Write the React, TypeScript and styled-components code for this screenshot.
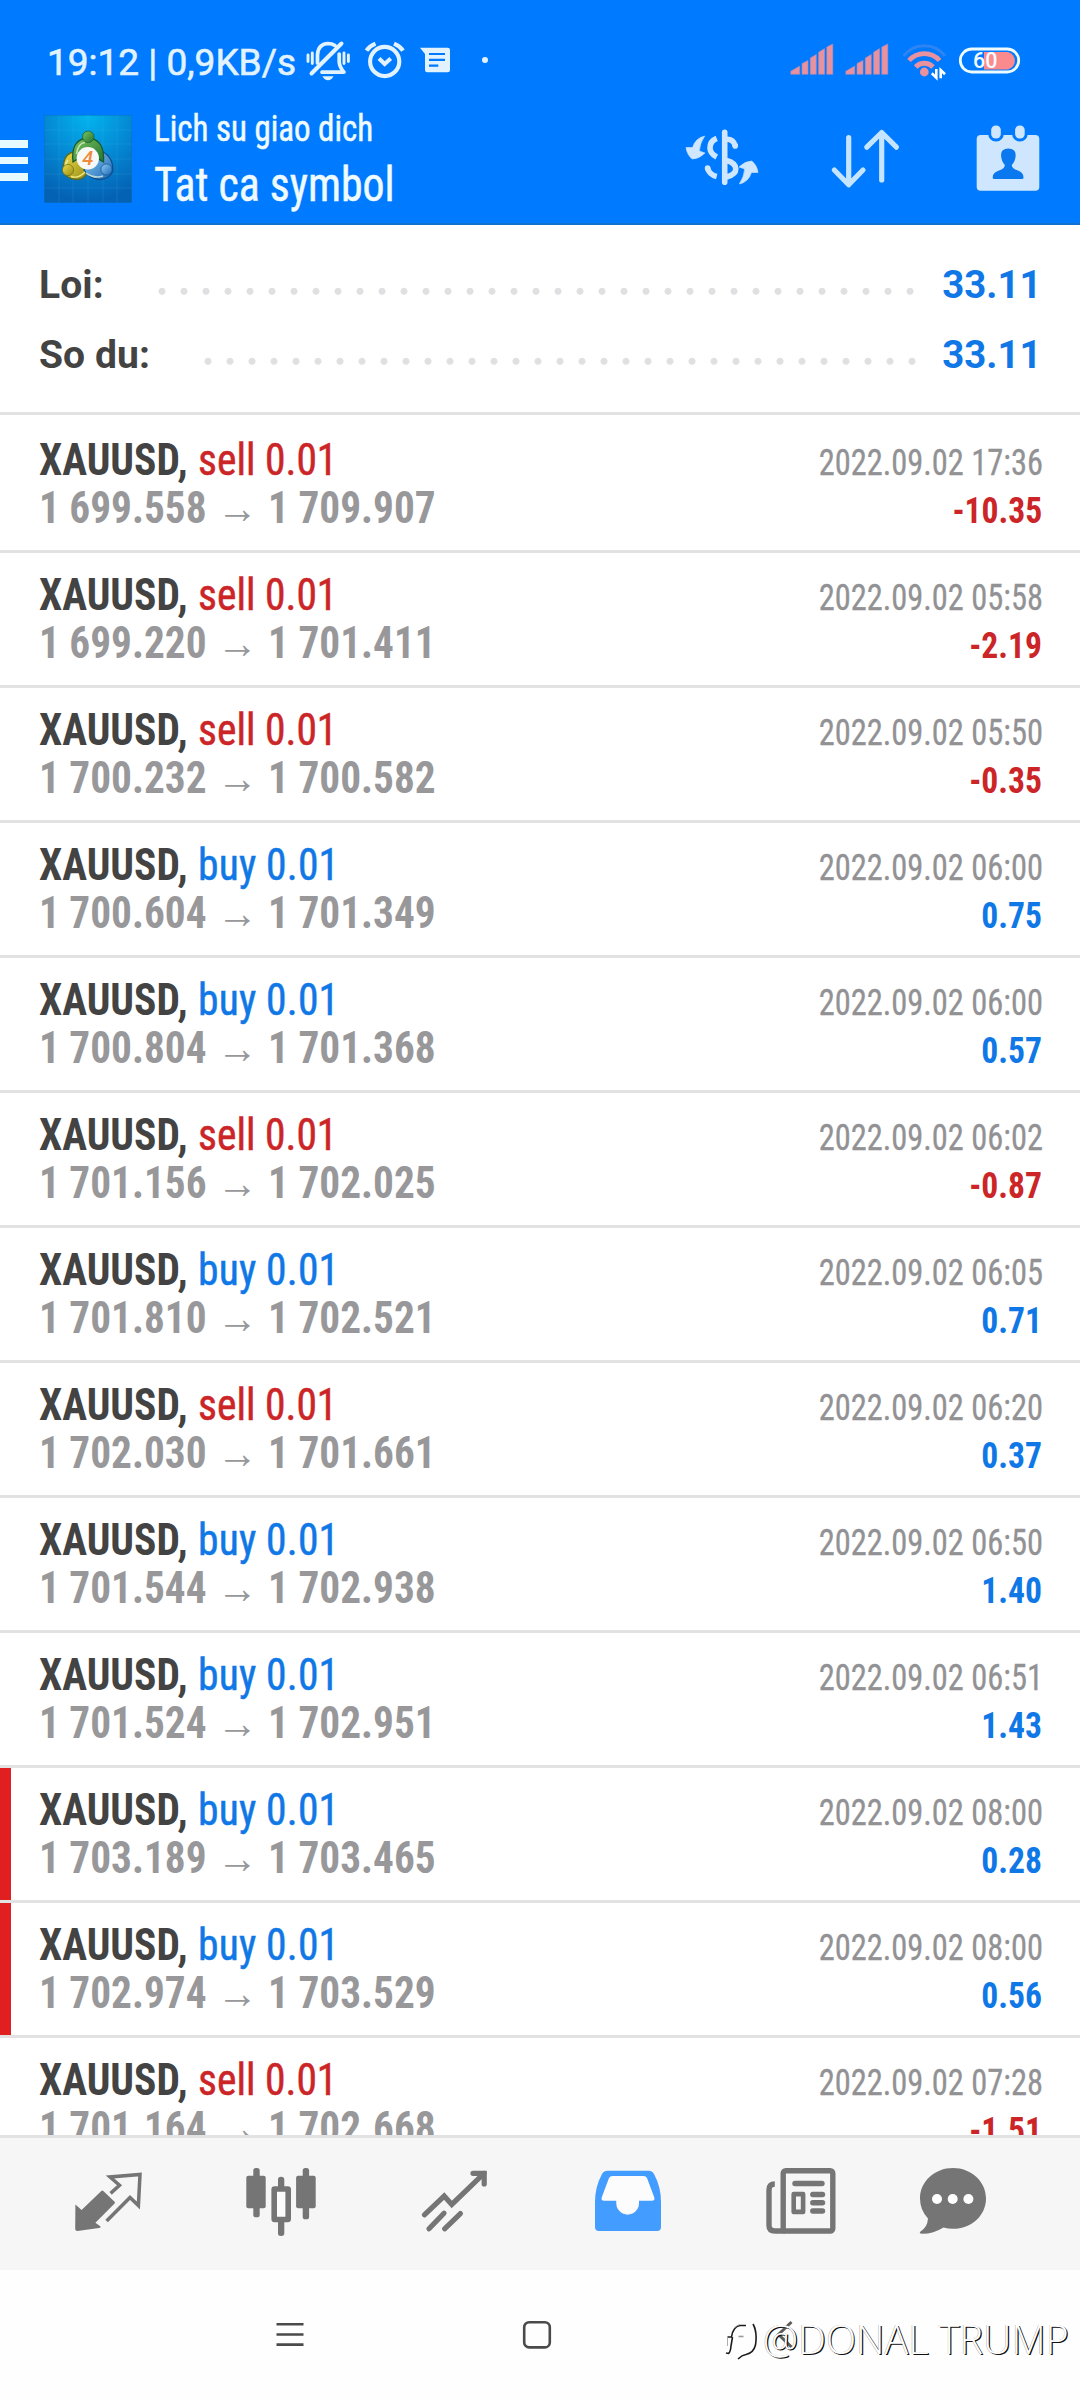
import React from 'react';
import styled, { createGlobalStyle } from 'styled-components';

const BLUE = '#007aff';
const ICON = '#cfe6ff';
const STATUS = '#e2f3ff';
const SIGNAL = '#e8919f';
const GREY = '#757575';

const GlobalStyle = createGlobalStyle`
  html, body { margin: 0; padding: 0; background: #fff; }
  * { box-sizing: border-box; }
  svg { display: block; flex: none; }
`;

const Screen = styled.div`
  position: relative;
  width: 1080px;
  height: 2400px;
  display: flex;
  flex-direction: column;
  overflow: hidden;
  background: #fff;
  font-family: Roboto, 'Liberation Sans', sans-serif;
`;

const Header = styled.header`
  flex: none;
  height: 225px;
  background: ${BLUE};
  border-bottom: 2px solid #1272cf;
  padding-top: 30px;
`;

const StatusBar = styled.div`
  height: 60px;
  padding: 0 59px 0 47px;
  display: flex;
  align-items: center;
  color: ${STATUS};
`;

const StatusText = styled.span`
  font-size: 37px;
  line-height: 60px;
  margin-top: 5px;
  width: 249px;
  white-space: nowrap;
  -webkit-text-stroke: 0.6px ${STATUS};
`;

const StatusSlot = styled.span<{ $gap: number }>`
  margin-left: ${(p) => p.$gap}px;
`;

const Spacer = styled.span`
  flex: 1;
`;

const AppBar = styled.div`
  height: 134px;
  padding-right: 32px;
  display: flex;
  align-items: center;
`;

const MenuButton = styled.div`
  width: 28px;
  margin-top: 7px;
  display: flex;
  flex-direction: column;
  gap: 9px;
`;

const MenuBar = styled.span`
  height: 7.6px;
  background: #e6faff;
`;

const LogoBox = styled.div`
  width: 88px;
  height: 88px;
  margin: 4px 0 0 16px;
`;

const Titles = styled.div`
  margin-left: 22px;
  padding-top: 11px;
  width: 300px;
  color: #effbff;
  font-family: 'Roboto Condensed', Roboto, sans-serif;
  white-space: nowrap;
  -webkit-text-stroke: 0.5px #effbff;
`;

const Subtitle = styled.div`
  font-size: 36px;
  line-height: 44px;
  transform: scaleX(0.915);
  transform-origin: left;
`;

const Title = styled.div`
  font-size: 48px;
  line-height: 68px;
  transform: scaleX(0.913);
  transform-origin: left;
`;

const Actions = styled.div`
  margin-left: auto;
  display: flex;
  gap: 63px;
`;

const Summary = styled.section`
  flex: none;
  height: 190px;
  padding: 25px 38.5px 0 39px;
  border-bottom: 3px solid #e2e2e3;
`;

const SummaryRow = styled.div`
  display: flex;
  height: 70px;
  line-height: 70px;
  font-size: 39px;
  font-weight: 700;
  color: #434343;
`;

const SummaryLabel = styled.span`
  letter-spacing: 0.1px;
`;

const Dots = styled.span`
  flex: 1;
  margin: 0 16px 0 47px;
  background: radial-gradient(circle at 11px 41.3px, #e0e0e2 3px, transparent 4px) 0 0 / 22px 70px repeat-x;
`;

const SummaryValue = styled.span`
  font-size: 38.4px;
  color: #0f78e6;
`;

const List = styled.main`
  flex: 1;
  min-height: 0;
  overflow: hidden;
  padding-top: 3px;
`;

const Row = styled.article<{ $flagged: boolean }>`
  height: 135px;
  padding: 18px 37.5px 0 39px;
  border-bottom: 3px solid #e2e2e3;
  font-family: 'Roboto Condensed', Roboto, sans-serif;
  ${(p) => (p.$flagged ? 'box-shadow: inset 11px 0 0 #e01f21;' : '')}
`;

const Line = styled.div`
  display: flex;
  justify-content: space-between;
  align-items: baseline;
  height: 48px;
  line-height: 48px;
  white-space: nowrap;
`;

const Deal = styled.span`
  font-size: 44px;
  transform: scaleX(0.943);
  transform-origin: left;
`;

const Symbol = styled.b`
  font-weight: 700;
  color: #434343;
`;

const Side = styled.span<{ $side: 'buy' | 'sell' }>`
  margin-left: 1px;
  letter-spacing: ${(p) => (p.$side === 'buy' ? 0.2 : 0)}px;
  color: ${(p) => (p.$side === 'buy' ? '#0f78e6' : '#cb2528')};
  -webkit-text-stroke: 0.5px ${(p) => (p.$side === 'buy' ? '#0f78e6' : '#cb2528')};
`;

const Prices = styled.span`
  font-size: 44px;
  font-weight: 700;
  color: #98989b;
  transform: scaleX(0.938);
  transform-origin: left;
`;

const Arrow = styled.span`
  margin: 0 0.6px 0 0.8px;
`;

const Time = styled.span`
  font-size: 36px;
  color: #929295;
  transform: scaleX(0.901);
  transform-origin: right;
  -webkit-text-stroke: 0.3px #929295;
`;

const Profit = styled.span<{ $loss: boolean }>`
  font-size: 36px;
  font-weight: 700;
  color: ${(p) => (p.$loss ? '#cb2528' : '#0f78e6')};
  transform: scaleX(0.933);
  transform-origin: right;
`;

const TabBar = styled.nav`
  flex: none;
  height: 135px;
  padding-left: 21px;
  border-top: 3px solid #e2e2e3;
  background: #f6f6f6;
  display: flex;
`;

const Tab = styled.div<{ $width?: number }>`
  width: ${(p) => p.$width ?? 173.3}px;
  display: flex;
  align-items: center;
  justify-content: center;
`;

const SystemBar = styled.div`
  flex: none;
  height: 130px;
  padding-left: 166px;
  background: #fefefe;
  display: flex;
`;

const SystemKey = styled.div`
  width: 247.6px;
  display: flex;
  align-items: center;
  justify-content: center;
`;

const Watermark = styled.div`
  position: absolute;
  left: 722px;
  top: 2312px;
  display: flex;
  align-items: center;
  height: 56px;
  white-space: nowrap;
  font: 300 40px/56px 'Open Sans', 'Noto Sans', sans-serif;
  color: #fff;
  text-shadow: 1.2px 1px 0.4px #111, -0.5px 0 0.5px rgba(0, 0, 0, 0.35);
`;

const WatermarkText = styled.span`
  margin: -3px 0 0 5px;
  transform: scaleX(0.988);
  transform-origin: left;
`;

const MutedBell = () => (
  <svg width="46" height="44" fill="none" stroke={STATUS} strokeLinecap="round" strokeWidth="2.8">
    <path d="M3 17v6.5M7.3 15v10.500M39 15v10.500M43.400 17v6.500" strokeWidth="2.900" />
    <path d="M12.5 25V17Q13 6 23 5.500Q27 5.500 30 7.500" strokeWidth="3.700" />
    <path d="M34.2 16V24Q34.500 29 39 34.200H17" strokeWidth="3.700" strokeLinejoin="round" />
    <path d="M6.500 35.500L36.500 5.500" strokeWidth="4" />
    <path d="M17.500 38.200h11q-2 4-5.500 4t-5.500-4z" fill={STATUS} stroke="none" />
  </svg>
);

const Alarm = () => (
  <svg width="42" height="44" fill="none" stroke={STATUS} strokeWidth="4.1">
    <circle cx="20.7" cy="23.5" r="14.6" />
    <path d="M15 20.5l5.7 5.5 6-5.5" />
    <path d="M2.5 12.6Q5.5 8 11.5 5.6M30 5.6Q36 8 39 12.6" strokeWidth="4.2" />
  </svg>
);

const Message = () => (
  <svg width="32" height="44">
    <path
      d="M1 9.7L6 16V32Q6 34.3 8.3 34.3H28.7Q31 34.3 31 32V12Q31 9.7 28.7 9.7Z"
      fill={STATUS}
    />
    <path d="M10 16h16M10 21.8h16M10 27.7h9.3" stroke={BLUE} strokeWidth="2.2" />
  </svg>
);

const Signal = () => (
  <svg width="44" height="44" fill={SIGNAL} stroke="#a88bbb" strokeWidth="0.6">
    <path d="M.8 36.3V33.2L9.7 28V36.3ZM12 36.3V25.6L18 22.4V36.3ZM20.3 36.3V20L26.3 16.4V36.3ZM28.6 36.3V14.2L34.6 10.6V36.3ZM36.8 36.3V9L42.8 6V36.3Z" />
  </svg>
);

const Wifi = () => (
  <svg width="46" height="44" fill="none">
    <path d="M2.7 18A26 26 0 0 1 44 18" stroke="#2f84f2" strokeWidth="3" />
    <path d="M8 22.5A20.5 20.5 0 0 1 38.6 22.5" stroke={SIGNAL} strokeWidth="4.8" />
    <path d="M14.6 29A12 12 0 0 1 32 29" stroke={SIGNAL} strokeWidth="4.8" />
    <circle cx="23.3" cy="34" r="4.4" fill={SIGNAL} />
    <path d="M35.3 31v8.6l-4.5-4.4M39.7 40.3V32l4.3 4.2" stroke="#fff" strokeWidth="2.6" />
  </svg>
);

const Battery = () => (
  <svg width="63" height="44">
    <path d="M26 14H50a9 9 0 0 1 0 17.5H26Z" fill="#fb8a8e" />
    <rect x="2.3" y="11" width="58.4" height="23" rx="11.5" fill="none" stroke="#effcff" strokeWidth="2.8" />
    <text x="15" y="30.2" fontFamily="Roboto" fontSize="21.5" fontWeight="500" fill="#f4fbff">60</text>
  </svg>
);

const StatusDot = () => (
  <svg width="8" height="44">
    <circle cx="4" cy="22" r="3" fill={STATUS} />
  </svg>
);

const AppLogo = () => (
  <svg width="88" height="88" viewBox="0 0 88 88">
    <defs>
      <radialGradient id="sky" cx="0.5" cy="0.02" r="0.95">
        <stop offset="0" stopColor="#02b3ee" />
        <stop offset="0.5" stopColor="#048ad4" />
        <stop offset="1" stopColor="#0462b4" />
      </radialGradient>
      <linearGradient id="green" x1="0" x2="1" y2="1">
        <stop offset="0" stopColor="#7fc45c" />
        <stop offset="1" stopColor="#1f7434" />
      </linearGradient>
      <linearGradient id="gold" x1="0" x2="1" y2="1">
        <stop offset="0" stopColor="#efdc45" />
        <stop offset="1" stopColor="#968d18" />
      </linearGradient>
      <linearGradient id="azure" x1="0" x2="1" y2="1">
        <stop offset="0" stopColor="#8fcbf2" />
        <stop offset="1" stopColor="#1a69b6" />
      </linearGradient>
    </defs>
    <rect width="88" height="88" fill="url(#sky)" stroke="#096fc4" />
    <path
      d="M15 0V88M29 0V88M44 0V88M59 0V88M73 0V88M0 15H88M0 29H88M0 44H88M0 59H88M0 73H88"
      stroke="#5cc4f4"
      strokeOpacity="0.15"
    />
    <path d="M29 37Q18 40 19.500 57Q23 64 33 64.500Q41 64 44 56L38 36Z" fill="url(#gold)" stroke="#5f6b1c" strokeWidth="1.300" />
    <path d="M59 37Q70 43 68.500 57Q65 64 55 64.500Q44 63 40 55L50 36Z" fill="url(#azure)" stroke="#134d8c" strokeWidth="1.300" />
    <path d="M29 47Q26.500 24 44 23Q61 24 59.500 47Q53 44 50 38H38Q36 43 29 47Z" fill="url(#green)" stroke="#175a30" strokeWidth="1.300" />
    <path d="M32.500 39Q34 28 41 27.500M24 45Q20.500 50 22 54M42 58Q50 64 59 61" fill="none" stroke="#e9fbe0" strokeOpacity="0.7" strokeWidth="1.6" />
    <path d="M27 61.500Q34 64 41 57" fill="none" stroke="#f2e981" strokeWidth="1.400" />
    <circle cx="44.3" cy="21.8" r="5.8" fill="url(#green)" stroke="#175a30" strokeWidth="0.7" />
    <circle cx="24" cy="55" r="5.6" fill="url(#gold)" stroke="#6d6b17" strokeWidth="0.7" />
    <circle cx="62.5" cy="54.5" r="5.6" fill="url(#azure)" stroke="#134d8c" strokeWidth="0.7" />
    <circle cx="43.8" cy="43.3" r="11.2" fill="#f7f9f7" />
    <text x="43.8" y="50.3" textAnchor="middle" fontFamily="Roboto" fontSize="20" fontWeight="500" fontStyle="italic" fill="#f08a3c">4</text>
  </svg>
);

const SYMBOL_ARROW = 'M22.7 19Q13.5 21 10.5 30.5L4 30.5Q5 38 10.3 42Q17 42 23 36L17.3 34Q18 26 22.7 19Z';

const CurrencyIcon = () => (
  <svg width="80" height="80" fill="none" stroke={ICON} strokeWidth="5.6">
    <path d={SYMBOL_ARROW} fill={ICON} stroke={ICON} strokeWidth="0.6" />
    <path d={SYMBOL_ARROW} fill={ICON} stroke={ICON} strokeWidth="0.6" transform="rotate(180 40 43)" />
    <path d="M42.7 15.3V65.3" strokeLinecap="round" />
    <path d="M34.7 21.3Q28 24 28 31Q28 36.5 34.7 40" />
    <path d="M44.5 22.3Q51.5 22 53.3 29" />
    <path d="M53.2 28.5v.4M25.6 51v.4" strokeLinecap="round" />
    <path d="M25.6 51Q27 57.5 34.7 59.5" />
    <path d="M44.5 43.5Q53.8 46 53.8 52Q53.8 57.5 44.5 60" />
  </svg>
);

const SortIcon = () => (
  <svg width="80" height="80" fill="none" stroke="#c4e4ff" strokeWidth="5.2" strokeLinecap="round" strokeLinejoin="round">
    <path d="M23.7 20.5V67M9.3 53L23.7 67.8L38 53" />
    <path d="M56.7 63V15.5M41.8 30.2L56.7 15.5L71.4 30.2" />
  </svg>
);

const CalendarIcon = () => (
  <svg width="80" height="80" fill={ICON}>
    <rect x="8.7" y="18" width="62.6" height="55.7" rx="4" />
    <g stroke={BLUE} strokeWidth="6" paintOrder="stroke">
      <rect x="23.2" y="8.5" width="9.6" height="13" rx="4.6" />
      <rect x="47.1" y="8.5" width="9.6" height="13" rx="4.6" />
    </g>
    <path
      d="M26 62Q24.7 62 24.7 60.5Q24.5 55.5 31 53.5Q37 51.5 36.8 48Q33.3 44 33 38Q33 31.5 40.3 31.5Q47.7 31.5 47.7 38Q47.5 44 43.8 48Q43.6 51.5 50 53.5Q55.5 55.5 55.5 60.5Q55.5 62 54 62Z"
      fill="#0a78ee"
    />
  </svg>
);

const QuotesIcon = () => (
  <svg width="80" height="80">
    <path
      d="M7.4 40.6L13.6 46L33.3 27Q34.3 26 35.3 27L46.6 37.8Q47.4 38.8 46.6 39.6L27.4 58.7L32.6 62.6Q33 64 31 64L9.4 67Q7.2 67 7.2 65Z"
      fill={GREY}
    />
    <path d="M42.6 29.4L51.5 21.2L42 13L72 10.4L70.4 41.6L62 33.4L38.6 57" fill="none" stroke={GREY} strokeWidth="3.5" />
  </svg>
);

const CandlesIcon = () => (
  <svg width="80" height="80" fill={GREY}>
    <rect x="5.3" y="11.8" width="19.4" height="32.4" rx="2" />
    <rect x="12.3" y="4" width="6.4" height="49.3" rx="2.6" />
    <rect x="55.1" y="11.8" width="19.6" height="32.4" rx="2" />
    <rect x="61.7" y="4" width="6.4" height="51.3" rx="2.6" />
    <path d="M37 24V15.5Q37 12.7 40.1 12.7T43.3 15.5V24ZM37 56V69.5Q37 72 40.1 72T43.3 69.5V56Z" />
    <rect x="33.2" y="25" width="14" height="30.5" rx="0.5" fill="#fbfbfb" stroke={GREY} strokeWidth="5.6" strokeLinejoin="round" />
  </svg>
);

const TrendIcon = () => (
  <svg width="80" height="80" fill="none" stroke={GREY} strokeWidth="5.2" strokeLinecap="round">
    <path d="M10.4 50.8L30.2 32L37.8 40.4L70 9.4" strokeLinejoin="miter" />
    <path d="M59 9.3H70.2V20" />
    <path d="M15 64.8L30 49.2M30.6 64.8L46.4 49.6" />
  </svg>
);

const InboxIcon = () => (
  <svg width="80" height="80">
    <path d="M20 10H60L69 34V39H11V34Z" fill="#fcfcfc" />
    <path
      fillRule="evenodd"
      fill="#439cff"
      d="M19.6 6.7H60.6Q64 6.7 66 10Q73 23 73 38V63Q73 67 69 67H11Q7 67 7 63V38Q7 23 14 10Q16 6.7 19.6 6.7ZM24.5 12Q22 12 21 14L13.7 33.5Q13 36.8 16 36.8H28.3V39.3A11.3 11.3 0 0 0 51 39.3V36.8H64Q67 36.8 66.3 33.5L59 14Q58 12 55.5 12Z"
    />
    <path d="M28.8 36.5H50.5V39.3A10.9 10.9 0 0 1 28.8 39.3Z" fill="#fcfcfc" />
  </svg>
);

const NewsIcon = () => (
  <svg width="80" height="80" fill="none" stroke={GREY} strokeWidth="5.4" strokeLinecap="round">
    <path d="M13.8 20Q8 20 8 26V61.5Q8 67 14 67H24" strokeLinecap="butt" />
    <rect x="22.2" y="6.7" width="49.6" height="60.3" rx="2.5" />
    <path d="M34 19.5H61" />
    <rect x="32.7" y="30.1" width="9.4" height="17.8" strokeWidth="4.6" strokeLinejoin="round" />
    <path d="M51.8 30.5H61.5M51.8 38.8H61.5M51.8 47H61.5" />
  </svg>
);

const ChatIcon = () => (
  <svg width="80" height="80">
    <path
      d="M40 4C58.5 4 73 17.5 73 34.5S58.5 64.8 40 64.8Q35 64.8 30.5 63.5Q20 70 9 69.8Q5.5 69.5 7.5 67.5Q14.5 63 15 54.5Q7 46 7 34.5C7 17.5 21.5 4 40 4Z"
      fill={GREY}
    />
    <g fill="#fff">
      <circle cx="24" cy="35" r="5" />
      <circle cx="39.7" cy="35" r="5" />
      <circle cx="55.4" cy="35" r="5" />
    </g>
  </svg>
);

const RecentsKey = () => (
  <svg width="30" height="30" stroke="#4a4a4a" strokeWidth="2.6">
    <path d="M1.5 4.200H28.500M1.500 14.500H28.500M1.500 24.600H28.500" />
  </svg>
);

const HomeKey = () => (
  <svg width="30" height="30" fill="none" stroke="#4a4a4a" strokeWidth="2.6">
    <rect x="2.2" y="2.2" width="25.6" height="25.2" rx="5" />
  </svg>
);

const BackKey = () => (
  <svg width="30" height="30" fill="none" stroke="#5c5c5c" strokeWidth="3">
    <path d="M21.5 2L8.5 14.5L21.5 27" />
  </svg>
);

const WatermarkLogo = () => (
  <svg width="36" height="44" fill="none">
    <g stroke="#1c1c1c" strokeWidth="1.6">
      <path d="M4 35L6.5 35.5Q8.5 34 9 28L10.5 19M5.5 19H9.5Q11 8.5 18 7.5H24" />
      <path d="M16.5 18.5H21.5" stroke="#999" />
      <path d="M31 6Q35.5 14 33.5 27Q31.5 35 24 36.5Q20 37 16 41" />
    </g>
    <path d="M5.5 28V19M12.5 10Q15 7 18 6.5" stroke="#999" strokeWidth="0.8" />
  </svg>
);

type Trade = {
  side: 'buy' | 'sell';
  open: string;
  close: string;
  time: string;
  profit: string;
  flagged?: boolean;
};

const trades: Trade[] = [
  { side: 'sell', open: '1 699.558', close: '1 709.907', time: '17:36', profit: '-10.35' },
  { side: 'sell', open: '1 699.220', close: '1 701.411', time: '05:58', profit: '-2.19' },
  { side: 'sell', open: '1 700.232', close: '1 700.582', time: '05:50', profit: '-0.35' },
  { side: 'buy', open: '1 700.604', close: '1 701.349', time: '06:00', profit: '0.75' },
  { side: 'buy', open: '1 700.804', close: '1 701.368', time: '06:00', profit: '0.57' },
  { side: 'sell', open: '1 701.156', close: '1 702.025', time: '06:02', profit: '-0.87' },
  { side: 'buy', open: '1 701.810', close: '1 702.521', time: '06:05', profit: '0.71' },
  { side: 'sell', open: '1 702.030', close: '1 701.661', time: '06:20', profit: '0.37' },
  { side: 'buy', open: '1 701.544', close: '1 702.938', time: '06:50', profit: '1.40' },
  { side: 'buy', open: '1 701.524', close: '1 702.951', time: '06:51', profit: '1.43' },
  { side: 'buy', open: '1 703.189', close: '1 703.465', time: '08:00', profit: '0.28', flagged: true },
  { side: 'buy', open: '1 702.974', close: '1 703.529', time: '08:00', profit: '0.56', flagged: true },
  { side: 'sell', open: '1 701.164', close: '1 702.668', time: '07:28', profit: '-1.51' },
];

const totals = [
  { label: 'Loi:', value: '33.11' },
  { label: 'So du:', value: '33.11' },
];

export default function App() {
  return (
    <Screen>
      <GlobalStyle />
      <Header>
        <StatusBar>
          <StatusText>19:12 | 0,9KB/s</StatusText>
          <StatusSlot $gap={9}><MutedBell /></StatusSlot>
          <StatusSlot $gap={13}><Alarm /></StatusSlot>
          <StatusSlot $gap={13}><Message /></StatusSlot>
          <StatusSlot $gap={30}><StatusDot /></StatusSlot>
          <Spacer />
          <Signal />
          <StatusSlot $gap={11}><Signal /></StatusSlot>
          <StatusSlot $gap={12}><Wifi /></StatusSlot>
          <StatusSlot $gap={11}><Battery /></StatusSlot>
        </StatusBar>
        <AppBar>
          <MenuButton>
            <MenuBar />
            <MenuBar />
            <MenuBar />
          </MenuButton>
          <LogoBox><AppLogo /></LogoBox>
          <Titles>
            <Subtitle>Lich su giao dich</Subtitle>
            <Title>Tat ca symbol</Title>
          </Titles>
          <Actions>
            <CurrencyIcon />
            <SortIcon />
            <CalendarIcon />
          </Actions>
        </AppBar>
      </Header>

      <Summary>
        {totals.map((t) => (
          <SummaryRow key={t.label}>
            <SummaryLabel>{t.label}</SummaryLabel>
            <Dots />
            <SummaryValue>{t.value}</SummaryValue>
          </SummaryRow>
        ))}
      </Summary>

      <List>
        {trades.map((t) => (
          <Row key={t.open} $flagged={!!t.flagged}>
            <Line>
              <Deal>
                <Symbol>XAUUSD,</Symbol> <Side $side={t.side}>{t.side} 0.01</Side>
              </Deal>
              <Time>2022.09.02 {t.time}</Time>
            </Line>
            <Line>
              <Prices>
                {t.open} <Arrow>→</Arrow> {t.close}
              </Prices>
              <Profit $loss={t.profit.startsWith('-')}>{t.profit}</Profit>
            </Line>
          </Row>
        ))}
      </List>

      <TabBar>
        <Tab><QuotesIcon /></Tab>
        <Tab><CandlesIcon /></Tab>
        <Tab><TrendIcon /></Tab>
        <Tab><InboxIcon /></Tab>
        <Tab><NewsIcon /></Tab>
        <Tab $width={131}><ChatIcon /></Tab>
      </TabBar>

      <SystemBar>
        <SystemKey><RecentsKey /></SystemKey>
        <SystemKey><HomeKey /></SystemKey>
        <SystemKey><BackKey /></SystemKey>
      </SystemBar>

      <Watermark>
        <WatermarkLogo />
        <WatermarkText>@DONAL TRUMP</WatermarkText>
      </Watermark>
    </Screen>
  );
}
